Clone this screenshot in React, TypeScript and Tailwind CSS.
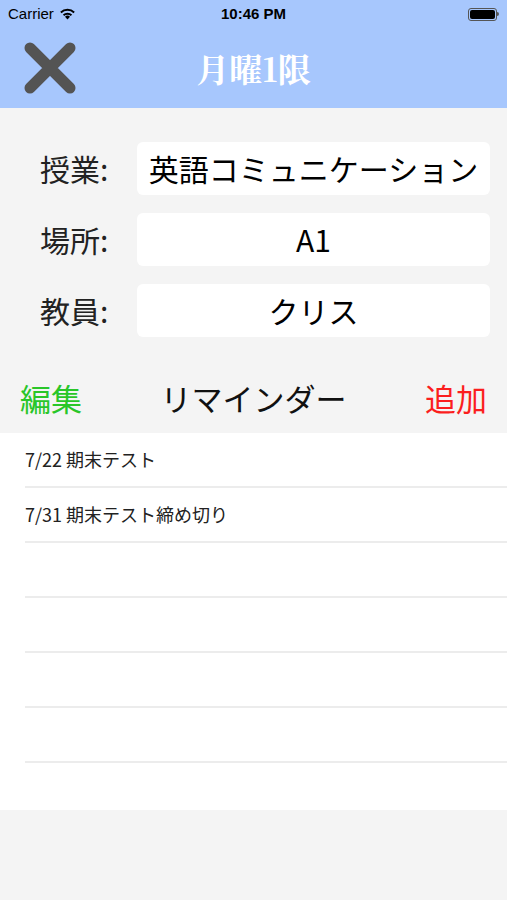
import React from 'react';

const reminders = ['7/22 期末テスト', '7/31 期末テスト締め切り', '', '', '', ''];

const fields = [
  { label: '授業:', value: '英語コミュニケーション' },
  { label: '場所:', value: 'A1' },
  { label: '教員:', value: 'クリス' },
];

const App: React.FC = () => {
  return (
    <div
      className="w-[507px] h-[900px] bg-[#f4f4f4] flex flex-col overflow-hidden"
      style={{ fontFamily: '"Noto Sans CJK JP", "Noto Sans", sans-serif' }}
    >
      {/* Status bar + nav */}
      <div className="bg-[#a7c7fd] h-[108px] flex flex-col">
        <div className="h-[28px] flex items-center justify-between px-[8px] text-[15px] text-black" style={{ fontFamily: '"Liberation Sans", sans-serif' }}>
          <div className="flex items-center gap-[5px] w-[120px]">
            <span>Carrier</span>
            <svg width="17" height="12" viewBox="0 0 17 12">
              <path d="M8.5 11.5 L6 8.7 A3.8 3.8 0 0 1 11 8.7 Z" fill="#000" />
              <path d="M3.9 6.6 A6.5 6.5 0 0 1 13.1 6.6 L11.8 8 A4.7 4.7 0 0 0 5.2 8 Z" fill="#000" />
              <path d="M1.2 3.8 A10.4 10.4 0 0 1 15.8 3.8 L14.5 5.2 A8.5 8.5 0 0 0 2.5 5.2 Z" fill="#000" />
            </svg>
          </div>
          <span className="font-bold text-[15px]">10:46 PM</span>
          <div className="w-[120px] flex justify-end">
            <div className="flex items-center">
              <div className="w-[29px] h-[13px] border border-[#555] rounded-[3px] p-[1px]">
                <div className="w-full h-full bg-black rounded-[2px]" />
              </div>
              <div className="w-[2px] h-[4px] bg-[#555] rounded-r-sm" />
            </div>
          </div>
        </div>
        <div className="flex-1 flex items-center relative">
          <button className="ml-[22px] w-[56px] h-[56px] flex items-center justify-center">
            <svg width="56" height="56" viewBox="0 0 56 56">
              <path d="M8 8 L48 48 M48 8 L8 48" stroke="#545454" strokeWidth="11" strokeLinecap="round" />
            </svg>
          </button>
          <span
            className="absolute left-0 right-0 text-center text-white text-[33px] font-bold pointer-events-none"
            style={{ fontFamily: '"Noto Serif CJK JP", "Liberation Serif", serif' }}
          >
            月曜1限
          </span>
        </div>
      </div>

      {/* Fields */}
      <div className="pt-[34px] flex flex-col gap-[18px] pr-[17px]">
        {fields.map(f => (
          <div key={f.label} className="flex items-center">
            <span className="w-[137px] pl-[40px] text-[30px] text-[#222]">{f.label}</span>
            <div className="flex-1 h-[53px] bg-white rounded-[6px] flex items-center justify-center text-[30px] text-black whitespace-nowrap overflow-hidden">
              {f.value}
            </div>
          </div>
        ))}
      </div>

      {/* Reminder header */}
      <div className="h-[96px] pt-[26px] flex items-center justify-between px-[20px] text-[31px]">
        <span className="text-[#29c629]">編集</span>
        <span className="text-[#111]">リマインダー</span>
        <span className="text-[#fb1e1e]">追加</span>
      </div>

      {/* Reminder list */}
      <div className="bg-white h-[377px] flex flex-col">
        {reminders.map((r, i) => (
          <div key={i} className="h-[55px] ml-[25px] border-b-2 border-[#ececec] flex items-center text-[18px] text-[#222]">
            {r}
          </div>
        ))}
      </div>
    </div>
  );
};

export default App;
